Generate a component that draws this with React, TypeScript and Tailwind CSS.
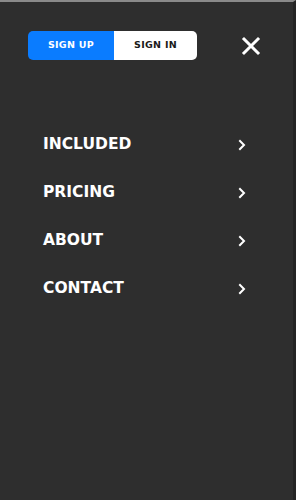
import { useState } from "react";

const items = ["INCLUDED", "PRICING", "ABOUT", "CONTACT"];

const Chevron = () => (
  <svg width="8" height="12" viewBox="0 0 8 12" fill="none">
    <path d="M2 2l4 4-4 4" stroke="white" strokeWidth="2" strokeLinecap="square" />
  </svg>
);

const CloseIcon = () => (
  <svg width="20" height="20" viewBox="0 0 20 20" fill="none">
    <path d="M3 3l14 14M17 3L3 17" stroke="white" strokeWidth="3" strokeLinecap="square" />
  </svg>
);

const App = () => {
  const [tab, setTab] = useState("up");

  return (
    <div
      className="w-[296px] h-[500px] bg-[#2e2e2e] border-t-2 border-t-[#8a8a8a] border-r-[3px] border-r-[#242424] flex flex-col"
      style={{ fontFamily: '"DejaVu Sans", sans-serif' }}
    >
      <div className="flex items-center pl-[28px] pr-[32px] pt-[29px]">
        <div className="flex h-[29px] rounded-[5px] overflow-hidden">
          <button
            className="w-[86px] bg-[#0a7cff] text-white text-[9.5px] font-bold tracking-[0.3px]"
            onClick={() => setTab("up")}
          >
            SIGN UP
          </button>
          <button
            className="w-[83px] bg-white text-[#1a1a1a] text-[9.5px] font-bold tracking-[0.3px]"
            onClick={() => setTab("in")}
          >
            SIGN IN
          </button>
        </div>
        <button className="ml-auto">
          <CloseIcon />
        </button>
      </div>

      <ul className="flex flex-col mt-[75px] pl-[43px] pr-[47px] gap-[28px]">
        {items.map((item) => (
          <li key={item} className="flex items-center justify-between h-[20px]">
            <span className="text-white text-[15.5px] font-bold tracking-[0px]">{item}</span>
            <Chevron />
          </li>
        ))}
      </ul>
    </div>
  );
};

export default App;
